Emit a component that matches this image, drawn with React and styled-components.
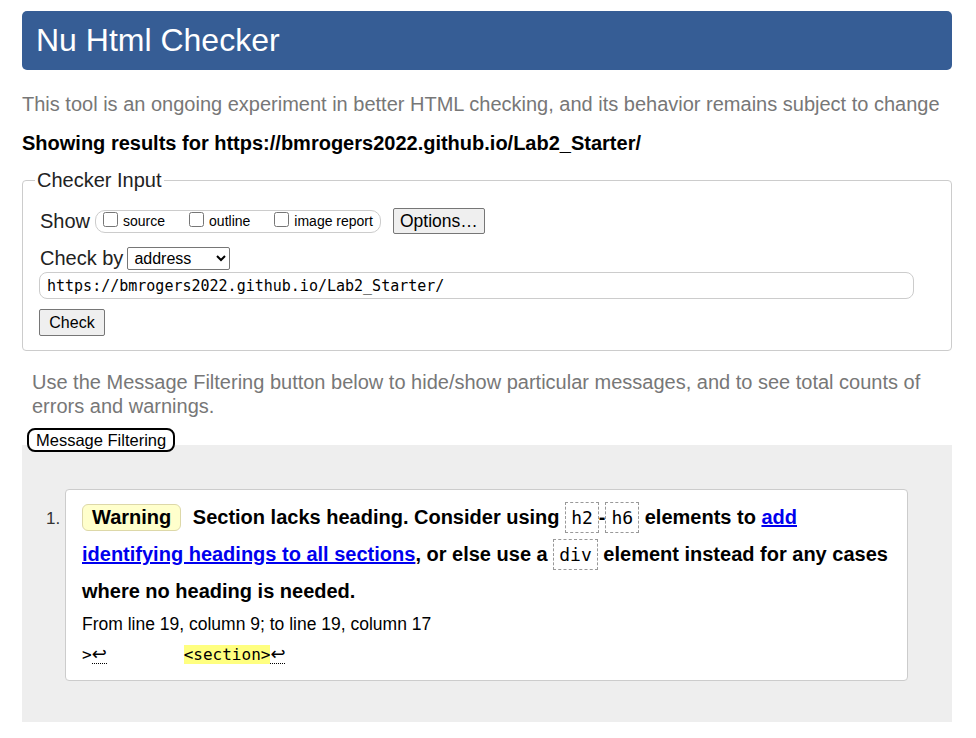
import styled, { createGlobalStyle } from "styled-components";

const GlobalStyle = createGlobalStyle`
  body {
    margin: 0;
    background: #fff;
    color: #000;
    font-family: "Liberation Sans", Arial, sans-serif;
  }
`;

const mono = `"DejaVu Sans Mono", "Liberation Mono", monospace`;

export default function App() {
  return (
    <>
      <GlobalStyle />
      <Page>
        <Header>Nu Html Checker</Header>
        <Intro>
          This tool is an ongoing experiment in better HTML checking, and its
          behavior remains subject to change
        </Intro>
        <ResultsFor>
          Showing results for https://bmrogers2022.github.io/Lab2_Starter/
        </ResultsFor>

        <InputBox>
          <Legend>Checker Input</Legend>
          <ShowRow>
            <RowLabel>Show</RowLabel>
            <ToggleGroup>
              <Toggle>
                <input type="checkbox" />
                source
              </Toggle>
              <Toggle>
                <input type="checkbox" />
                outline
              </Toggle>
              <Toggle>
                <input type="checkbox" />
                image report
              </Toggle>
            </ToggleGroup>
            <OptionsButton>Options…</OptionsButton>
          </ShowRow>
          <CheckByRow>
            <RowLabel>Check by</RowLabel>
            <DocSelect defaultValue="address">
              <option value="address">address</option>
              <option value="file">file upload</option>
              <option value="text">text input</option>
            </DocSelect>
          </CheckByRow>
          <UrlInput
            type="text"
            defaultValue="https://bmrogers2022.github.io/Lab2_Starter/"
          />
          <CheckButton>Check</CheckButton>
        </InputBox>

        <FilterHint>
          Use the Message Filtering button below to hide/show particular
          messages, and to see total counts of errors and warnings.
        </FilterHint>
        <FilterButton>Message Filtering</FilterButton>

        <Results>
          <MessageList>
            <li>
              <MessageCard>
                <Message>
                  <Badge>Warning</Badge> Section lacks heading. Consider using{" "}
                  <Code>h2</Code>-<Code>h6</Code> elements to{" "}
                  <Link href="#">add identifying headings to all sections</Link>
                  , or else use a <Code>div</Code> element instead for any
                  cases where no heading is needed.
                </Message>
                <Location>From line 19, column 9; to line 19, column 17</Location>
                <Extract>
                  {">"}
                  <LineBreak>↩</LineBreak>
                  {"        "}
                  <Highlight>{"<section>"}</Highlight>
                  <LineBreak>↩</LineBreak>
                </Extract>
              </MessageCard>
            </li>
          </MessageList>
        </Results>
      </Page>
    </>
  );
}

const Page = styled.div`
  padding: 11px 24px 16px 22px;
`;

const Header = styled.h1`
  margin: 0;
  height: 59px;
  padding: 0 14px;
  border-radius: 5px;
  background: #365d95;
  color: #fff;
  font-size: 32px;
  font-weight: normal;
  line-height: 59px;
`;

const Intro = styled.p`
  margin: 22px 0 0;
  color: #777;
  font-size: 20px;
  line-height: 24px;
`;

const ResultsFor = styled.p`
  margin: 15px 0 0;
  font-size: 20px;
  font-weight: bold;
  line-height: 24px;
`;

const InputBox = styled.fieldset`
  margin: 13px 0 0;
  padding: 0 17px 14px;
  border: 1px solid #ccc;
  border-radius: 4px;
  display: flex;
  flex-direction: column;
  align-items: flex-start;
`;

const Legend = styled.legend`
  margin-left: -5px;
  padding: 0 2px;
  color: #222;
  font-size: 20px;
  line-height: 24px;
`;

const ShowRow = styled.div`
  margin-top: 15px;
  height: 28px;
  display: flex;
  align-items: center;
`;

const CheckByRow = styled.div`
  margin-top: 11px;
  height: 24px;
  display: flex;
  align-items: center;
  gap: 4px;
`;

const RowLabel = styled.span`
  color: #222;
  font-size: 20px;
`;

const ToggleGroup = styled.span`
  margin-left: 5px;
  height: 21px;
  padding: 0 7px;
  border: 1px solid #ccc;
  border-radius: 10px;
  display: flex;
  align-items: center;
  gap: 24px;
`;

const Toggle = styled.label`
  display: flex;
  align-items: center;
  gap: 5px;
  font-size: 14px;

  input {
    margin: -3px 0 0;
    width: 15px;
    height: 15px;
  }
`;

const OptionsButton = styled.button`
  margin-left: 12px;
  height: 26px;
  padding: 0 6px;
  border: 1px solid #767676;
  border-radius: 2px;
  background: #efefef;
  color: #000;
  font-family: inherit;
  font-size: 17.5px;
`;

const DocSelect = styled.select`
  width: 103px;
  height: 23px;
  padding: 0 2px;
  border: 1px solid #767676;
  border-radius: 2px;
  background: #fff;
  color: #000;
  font-family: inherit;
  font-size: 16px;
`;

const UrlInput = styled.input`
  margin: 2px 0 0 -1px;
  width: 875px;
  height: 27px;
  box-sizing: border-box;
  padding: 0 7px;
  border: 1px solid #ccc;
  border-radius: 8px;
  font-family: ${mono};
  font-size: 15px;
  color: #000;
`;

const CheckButton = styled.button`
  margin: 10px 0 0 -1px;
  width: 66px;
  height: 27px;
  padding: 0;
  border: 1px solid #767676;
  border-radius: 2px;
  background: #efefef;
  color: #000;
  font-family: inherit;
  font-size: 16px;
`;

const FilterHint = styled.p`
  margin: 19px 0 0;
  padding: 0 10px;
  color: #777;
  font-size: 20px;
  line-height: 24px;
`;

const FilterButton = styled.button`
  position: relative;
  z-index: 1;
  display: block;
  width: fit-content;
  margin: 10px 0 -7px 5px;
  height: 24px;
  padding: 0 7px;
  border: 2px solid #000;
  border-radius: 8px;
  background: #fff;
  color: #000;
  font-family: inherit;
  font-size: 16.5px;
`;

const Results = styled.section`
  background: #eee;
  padding: 44px 44px 41px 0;
`;

const MessageList = styled.ol`
  margin: 0;
  padding-left: 43px;
  color: #333;
  font-size: 17px;
`;

const MessageCard = styled.div`
  padding: 9px 16px 15px;
  border: 1px solid #ccc;
  border-radius: 4px;
  background: #fff;
  color: #000;
`;

const Message = styled.p`
  margin: 0;
  font-size: 20px;
  font-weight: bold;
  line-height: 37px;
`;

const Badge = styled.span`
  display: inline-block;
  margin-right: 6px;
  padding: 0 9px;
  line-height: 25px;
  border: 1px solid #ddd8a8;
  border-radius: 6px;
  background: #ffffcc;
`;

const Code = styled.code`
  padding: 4px 5px;
  border: 1px dashed #999;
  font-family: ${mono};
  font-size: 18px;
  font-weight: normal;
`;

const Link = styled.a`
  color: #0000ee;
  text-decoration: underline;
`;

const Location = styled.p`
  margin: 4px 0 0;
  font-size: 17.5px;
  line-height: 20px;
`;

const Extract = styled.p`
  margin: 11px 0 0;
  font-family: ${mono};
  font-size: 16px;
  line-height: 20px;
  white-space: pre;
`;

const LineBreak = styled.span`
  display: inline-block;
  width: 15px;
  line-height: 18px;
  border-bottom: 1px dotted #000;
  font-family: "DejaVu Sans", sans-serif;
  font-size: 18px;
  text-align: center;
`;

const Highlight = styled.mark`
  background: #ffff80;
  color: #000;
`;
